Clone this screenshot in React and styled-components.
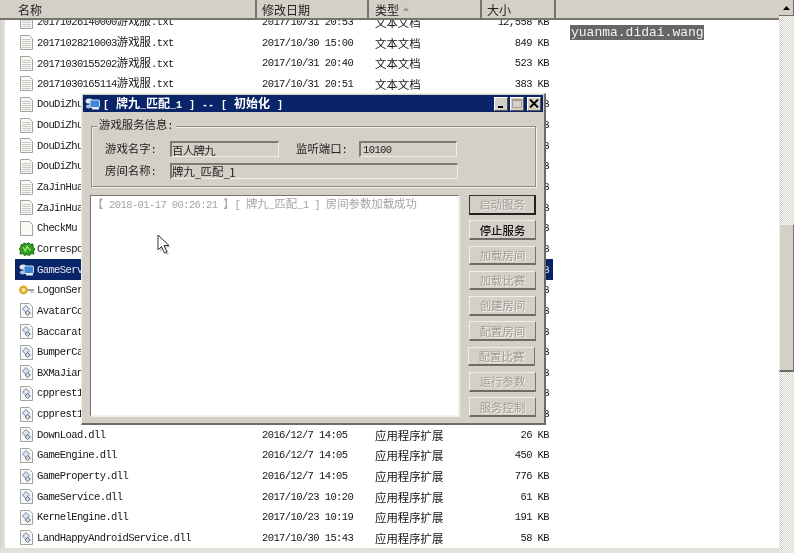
import styled, { createGlobalStyle } from "styled-components";

const GlobalStyle = createGlobalStyle`
    html, body {
        margin: 0;
        padding: 0;
        background: #fff;
        overflow: hidden;
    }
    * {
        box-sizing: border-box;
    }
`;

const GRAY = "#d4d0c8";
const NAVY = "#0a246a";

const files = [
    { name: "20171026140000游戏服.txt", date: "2017/10/31 20:53", type: "文本文档", size: "12,558", icon: "txt" },
    { name: "20171028210003游戏服.txt", date: "2017/10/30 15:00", type: "文本文档", size: "849", icon: "txt" },
    { name: "20171030155202游戏服.txt", date: "2017/10/31 20:40", type: "文本文档", size: "523", icon: "txt" },
    { name: "20171030165114游戏服.txt", date: "2017/10/31 20:51", type: "文本文档", size: "383", icon: "txt" },
    { name: "DouDiZhu", size: "8", icon: "txt" },
    { name: "DouDiZhu", size: "8", icon: "txt" },
    { name: "DouDiZhu", size: "8", icon: "txt" },
    { name: "DouDiZhu", size: "8", icon: "txt" },
    { name: "ZaJinHua", size: "8", icon: "txt" },
    { name: "ZaJinHua", size: "8", icon: "txt" },
    { name: "CheckMu", size: "8", icon: "blank" },
    { name: "Correspond", size: "8", icon: "green" },
    { name: "GameServer", size: "8", icon: "computer", selected: true },
    { name: "LogonServer", size: "8", icon: "key" },
    { name: "AvatarControl", size: "8", icon: "dll" },
    { name: "Baccarat", size: "8", icon: "dll" },
    { name: "BumperCar", size: "8", icon: "dll" },
    { name: "BXMaJiang", size: "8", icon: "dll" },
    { name: "cpprest1", size: "8", icon: "dll" },
    { name: "cpprest1", size: "8", icon: "dll" },
    { name: "DownLoad.dll", date: "2016/12/7 14:05", type: "应用程序扩展", size: "26", icon: "dll" },
    { name: "GameEngine.dll", date: "2016/12/7 14:05", type: "应用程序扩展", size: "450", icon: "dll" },
    { name: "GameProperty.dll", date: "2016/12/7 14:05", type: "应用程序扩展", size: "776", icon: "dll" },
    { name: "GameService.dll", date: "2017/10/23 10:20", type: "应用程序扩展", size: "61", icon: "dll" },
    { name: "KernelEngine.dll", date: "2017/10/23 10:19", type: "应用程序扩展", size: "191", icon: "dll" },
    { name: "LandHappyAndroidService.dll", date: "2017/10/30 15:43", type: "应用程序扩展", size: "58", icon: "dll" },
];

const services = [
    { label: "启动服务", isDefault: true },
    { label: "停止服务", enabled: true },
    { label: "加载房间" },
    { label: "加载比赛" },
    { label: "创建房间" },
    { label: "配置房间" },
    { label: "配置比赛", shift: true },
    { label: "运行参数" },
    { label: "服务控制" },
];

// SimSun style text: narrow latin next to wider CJK
const Mixed = ({ text }) =>
    text.split(/([\u3000-\u9fff\uff00-\uffef]+)/).map((part, i) =>
        i % 2 ? <Cjk key={i}>{part}</Cjk> : <span key={i}>{part}</span>
    );

const PageShape = () => (
    <path d="M.5 .5H9.5L12.5 3.5V14.5H.5Z" fill="#f8f8f5" stroke="#a2a2a0" />
);

const TxtIcon = () => (
    <svg width="13" height="15" viewBox="0 0 13 15">
        <PageShape />
        <path d="M2 4.5H11M2 6.5H11M2 8.5H11M2 10.5H11M2 12.5H11" stroke="#c8c8c4" />
    </svg>
);

const BlankIcon = () => (
    <svg width="13" height="15" viewBox="0 0 13 15">
        <PageShape />
    </svg>
);

const DllIcon = () => (
    <svg width="13" height="15" viewBox="0 0 13 15">
        <PageShape />
        <path d="M2.5 6L6 2.5L9.5 6L6 9.5Z" fill="#dbe3ef" stroke="#7488ad" />
        <path d="M5 10L7.5 7.5L10.5 10L7.5 12.5Z" fill="#c9d2e0" stroke="#66728c" />
    </svg>
);

const GreenIcon = () => (
    <svg width="16" height="14" viewBox="0 0 16 14">
        <path d="M2 2.5L4 3L5 1L7.5 2L10 .8L11 2.5L14 2L14 5L15.7 7L14.5 9.5L15 12L12 11.5L10.5 13.5L8 12.5L5.5 13.5L4 11.5L1 12L1.5 9L.3 6.5L2 5Z" fill="#2f9e1e" stroke="#1a6b12" />
        <path d="M4 5L6.5 9L8 4.5L11.5 8.5" fill="none" stroke="#a5e07f" strokeWidth="1.4" />
    </svg>
);

const ComputerIcon = () => (
    <svg width="16" height="14" viewBox="0 0 16 14">
        <ellipse cx="4" cy="4" rx="3.5" ry="2.6" fill="#dfe7f4" />
        <rect x="5" y="3" width="9.5" height="7.5" rx="1" fill="#3f86d8" stroke="#cfe0f5" />
        <path d="M7 11.5H14" stroke="#e8eef7" strokeWidth="2" />
        <ellipse cx="3.5" cy="9.5" rx="2.6" ry="2" fill="#aebfd8" />
    </svg>
);

const KeyIcon = () => (
    <svg width="16" height="12" viewBox="0 0 16 12">
        <circle cx="4.5" cy="6" r="3.2" fill="#f5e6b0" stroke="#e0a81c" strokeWidth="2.4" />
        <path d="M8 6H15" stroke="#a8a8a0" strokeWidth="2" />
        <path d="M12 7V9M14 7V9" stroke="#a8a8a0" />
    </svg>
);

const fileIcons = {
    txt: TxtIcon,
    blank: BlankIcon,
    dll: DllIcon,
    green: GreenIcon,
    computer: ComputerIcon,
    key: KeyIcon,
};

const FileRow = ({ file }) => {
    const Icon = fileIcons[file.icon];
    return (
        <Row $selected={file.selected}>
            <NameCell>
                <IconSlot $wide={file.icon === "green" || file.icon === "computer" || file.icon === "key"}>
                    <Icon />
                </IconSlot>
                <NameText><Mixed text={file.name} /></NameText>
            </NameCell>
            <DateCell>{file.date}</DateCell>
            <TypeCell>{file.type}</TypeCell>
            <SizeCell>{file.size} KB</SizeCell>
        </Row>
    );
};

const App = () => {
    return (
        <Screen>
            <GlobalStyle />
            <LeftEdge />
            <Explorer>
                <Header>
                    <HeadCell $w={257} $pad={18}>名称</HeadCell>
                    <HeadCell $w={112} $pad={5}>修改日期</HeadCell>
                    <HeadCell $w={113} $pad={6}>
                        类型
                        <SortArrow />
                    </HeadCell>
                    <HeadCell $w={74} $pad={5}>大小</HeadCell>
                    <HeadFill />
                </Header>
                <List>
                    {files.map((file, i) => <FileRow key={i} file={file} />)}
                </List>
                <BottomBand />
            </Explorer>
            <Scrollbar>
                <ScrollButton>
                    <svg width="7" height="4" viewBox="0 0 7 4"><path d="M3.5 0L7 4H0Z" fill="#000" /></svg>
                </ScrollButton>
                <ScrollGap $h={208} />
                <ScrollThumb />
                <ScrollGap />
            </Scrollbar>

            <Watermark>yuanma.didai.wang</Watermark>

            <Dialog>
                <TitleBar>
                    <TitleIcon><ComputerIcon /></TitleIcon>
                    <TitleText><Mixed text="[ 牌九_匹配_1 ] -- [ 初始化 ]" /></TitleText>
                    <CaptionButtons>
                        <CaptionButton>
                            <svg width="8" height="8" viewBox="0 0 8 8"><path d="M1 7H6" stroke="#000" strokeWidth="2" /></svg>
                        </CaptionButton>
                        <CaptionButton $gap={2}>
                            <svg width="10" height="9" viewBox="0 0 10 9"><path d="M.5 .5H9.5V8.5H.5Z M.5 1.5H9.5" fill="none" stroke="#a09c94" /></svg>
                        </CaptionButton>
                        <CaptionButton $gap={3}>
                            <svg width="10" height="9" viewBox="0 0 10 9"><path d="M1 .5L9 8.5M9 .5L1 8.5" stroke="#000" strokeWidth="1.8" /></svg>
                        </CaptionButton>
                    </CaptionButtons>
                </TitleBar>
                <DialogBody>
                    <InfoGroup>
                        <InfoLegend><Mixed text="游戏服务信息:" /></InfoLegend>
                        <FormRow>
                            <FieldLabel><Mixed text="游戏名字:" /></FieldLabel>
                            <Field $w={109}>百人牌九</Field>
                            <FieldLabel $gap={17} $w={63}><Mixed text="监听端口:" /></FieldLabel>
                            <Field $w={98} $mono>10100</Field>
                        </FormRow>
                        <FormRow>
                            <FieldLabel><Mixed text="房间名称:" /></FieldLabel>
                            <Field $w={288}><Mixed text="牌九_匹配_1" /></Field>
                        </FormRow>
                    </InfoGroup>
                    <DialogMain>
                        <LogBox>
                            <Mixed text="【 2018-01-17 00:26:21 】[ 牌九_匹配_1 ] 房间参数加载成功" />
                        </LogBox>
                        <ButtonColumn>
                            {services.map((s) => (
                                <ServiceButton
                                    key={s.label}
                                    $enabled={s.enabled}
                                    $isDefault={s.isDefault}
                                    $shift={s.shift}
                                >
                                    {s.label}
                                </ServiceButton>
                            ))}
                        </ButtonColumn>
                    </DialogMain>
                </DialogBody>
            </Dialog>

            <Cursor width="15" height="23" viewBox="0 0 15 23">
                <path d="M3 3V18L6.5 14.5L9.5 21L12 20L9 13.5H14Z" fill="#888" opacity=".45" />
                <path d="M1 1V16L4.5 12.5L7.5 19L10 18L7 11.5H12Z" fill="#fff" stroke="#333" />
            </Cursor>
        </Screen>
    );
};

const Screen = styled.div`
    position: relative;
    display: flex;
    width: 794px;
    height: 553px;
    overflow: hidden;
    background: #fff;
    font-family: "Liberation Mono", monospace;
    font-size: 10.5px;
    letter-spacing: -0.6px;
    color: #141414;
    filter: blur(0.3px);
`;

const Cjk = styled.span`
    font-family: "Noto Sans CJK SC", sans-serif;
    font-size: 11.4px;
    line-height: 1;
    letter-spacing: 0;
`;

const LeftEdge = styled.div`
    width: 5px;
    flex: none;
    background: linear-gradient(90deg, #d4d0c8, #e6e4df);
`;

const Explorer = styled.div`
    display: flex;
    flex-direction: column;
    width: 774px;
    flex: none;
`;

const Header = styled.div`
    position: relative;
    z-index: 1;
    display: flex;
    flex: none;
    height: 20px;
    margin-left: -5px;
    background: ${GRAY};
    border-bottom: 2px solid #77746e;
`;

const HeadCell = styled.div`
    position: relative;
    display: flex;
    align-items: center;
    width: ${(p) => p.$w}px;
    padding-left: ${(p) => p.$pad}px;
    border-right: 2px solid #77746e;
    font-family: "Noto Sans CJK SC", sans-serif;
    font-size: 12px;
    letter-spacing: 0;
    color: #222;
`;

const HeadFill = styled.div`
    flex: 1;
`;

const SortArrow = styled.span`
    width: 0;
    height: 0;
    margin-left: 4px;
    border-left: 3px solid transparent;
    border-right: 3px solid transparent;
    border-bottom: 4px solid #9c9890;
`;

const List = styled.div`
    flex: 1;
    min-height: 0;
    overflow: hidden;
`;

const Row = styled.div`
    display: grid;
    grid-template-columns: 242px 113px 112px 71px;
    align-items: center;
    width: 538px;
    height: 20.65px;
    margin-left: 10px;
    white-space: nowrap;
    background: ${(p) => (p.$selected ? NAVY : "transparent")};
    color: ${(p) => (p.$selected ? "#e8e8f0" : "inherit")};

    &:first-child {
        margin-top: -8.4px;
    }
`;

const NameCell = styled.div`
    display: flex;
    align-items: center;
    overflow: hidden;
`;

const IconSlot = styled.span`
    display: flex;
    width: 22px;
    flex: none;
    padding-left: ${(p) => (p.$wide ? 4 : 5)}px;
`;

const NameText = styled.span`
    display: block;
`;

const DateCell = styled.div`
    padding-left: 5px;
`;

const TypeCell = styled.div`
    padding-left: 5px;
    font-family: "Noto Sans CJK SC", sans-serif;
    font-size: 11.4px;
    letter-spacing: 0;
`;

const SizeCell = styled.div`
    padding-right: 4px;
    text-align: right;
`;

const BottomBand = styled.div`
    flex: none;
    height: 5px;
    margin-left: -5px;
    background: #e2e0da;
`;

const Scrollbar = styled.div`
    display: flex;
    flex-direction: column;
    width: 15px;
    flex: none;
`;

const ScrollButton = styled.div`
    display: flex;
    align-items: center;
    justify-content: center;
    height: 16px;
    flex: none;
    background: ${GRAY};
    border-right: 1px solid #6e6b65;
    border-bottom: 1px solid #6e6b65;
`;

const ScrollGap = styled.div`
    flex: ${(p) => (p.$h ? `0 0 ${p.$h}px` : 1)};
    background: repeating-conic-gradient(#fff 0 25%, ${GRAY} 0 50%) 0 0 / 2px 2px;
`;

const ScrollThumb = styled.div`
    height: 148px;
    flex: none;
    background: ${GRAY};
    border-top: 1px solid #f2f0ec;
    border-left: 1px solid #f2f0ec;
    border-right: 1px solid #77746e;
    border-bottom: 2px solid #6e6b65;
`;

const Watermark = styled.div`
    position: absolute;
    left: 570px;
    top: 25px;
    width: 134px;
    height: 15px;
    padding-left: 1px;
    background: #666;
    color: #f2f2f2;
    font-size: 13px;
    line-height: 15px;
    letter-spacing: 0;
    white-space: nowrap;
`;

const Dialog = styled.div`
    position: absolute;
    left: 81px;
    top: 93px;
    width: 465px;
    height: 332px;
    padding: 1px;
    background: ${GRAY};
    border-top: 1px solid #efede8;
    border-left: 1px solid #efede8;
    border-right: 2px solid #6f6c66;
    border-bottom: 2px solid #6f6c66;
    color: #222;
`;

const TitleBar = styled.div`
    display: flex;
    align-items: center;
    height: 17px;
    background: ${NAVY};
    color: #fff;
    font-weight: bold;
`;

const TitleIcon = styled.span`
    display: flex;
    width: 20px;
    flex: none;
    padding-left: 2px;
`;

const TitleText = styled.span`
    flex: 1;
    font-size: 10px;
    letter-spacing: 0;
    word-spacing: 1px;
    white-space: pre;

    ${Cjk} {
        font-size: 12px;
    }
`;

const CaptionButtons = styled.div`
    display: flex;
    padding-right: 2px;
`;

const CaptionButton = styled.div`
    display: flex;
    align-items: center;
    justify-content: center;
    width: 14px;
    height: 14px;
    margin-left: ${(p) => p.$gap || 0}px;
    background: ${GRAY};
    border-top: 1px solid #fff;
    border-left: 1px solid #fff;
    border-right: 1px solid #555;
    border-bottom: 1px solid #555;
`;

const DialogBody = styled.div`
    padding: 6px 0 0 7px;
`;

const InfoGroup = styled.fieldset`
    width: 445px;
    height: 69px;
    margin: 0 0 0 1px;
    padding: 7px 0 0 13px;
    border: 1px solid #8f8c85;
    box-shadow: 1px 1px 0 #f4f2ee, inset 1px 1px 0 #f4f2ee;
`;

const InfoLegend = styled.legend`
    height: 16px;
    margin-left: -8px;
    padding: 0 3px 0 2px;
    line-height: 16px;
    background: ${GRAY};
`;

const FormRow = styled.div`
    display: flex;
    align-items: center;
    margin-bottom: 6px;
`;

const FieldLabel = styled.div`
    width: ${(p) => p.$w || 65}px;
    margin-left: ${(p) => p.$gap || 0}px;
    flex: none;
`;

const Field = styled.div`
    display: flex;
    align-items: center;
    width: ${(p) => p.$w}px;
    height: 16px;
    padding-left: ${(p) => (p.$mono ? 2 : 0)}px;
    background: ${GRAY};
    border-top: 2px solid #7c7972;
    border-left: 2px solid #7c7972;
    border-right: 1px solid #f1efea;
    border-bottom: 1px solid #f1efea;
    font-family: ${(p) => (p.$mono ? `"Liberation Mono", monospace` : `"Noto Sans CJK SC", sans-serif`)};
    font-size: ${(p) => (p.$mono ? 10.5 : 11.4)}px;
`;

const DialogMain = styled.div`
    display: flex;
    margin-top: 8px;
`;

const LogBox = styled.div`
    width: 370px;
    height: 222px;
    padding: 2px 0 0 1px;
    background: #fff;
    border-top: 1px solid #77746e;
    border-left: 1px solid #77746e;
    border-right: 2px solid #f1efea;
    border-bottom: 2px solid #f1efea;
    color: #a4a4a4;
    white-space: pre;
`;

const ButtonColumn = styled.div`
    display: flex;
    flex-direction: column;
    gap: 5.8px;
    width: 67px;
    margin-left: 9px;
`;

const ServiceButton = styled.div`
    display: flex;
    align-items: center;
    justify-content: center;
    width: 67px;
    height: 19.5px;
    margin-left: ${(p) => (p.$shift ? -1 : 0)}px;
    background: ${GRAY};
    border-top: 1px solid ${(p) => (p.$isDefault ? "#333" : "#f1efea")};
    border-left: 1px solid ${(p) => (p.$isDefault ? "#333" : "#f1efea")};
    border-right: ${(p) => (p.$isDefault ? "2px solid #222" : "1px solid #77746e")};
    border-bottom: 2px solid ${(p) => (p.$isDefault ? "#222" : "#6f6c66")};
    font-family: "Noto Sans CJK SC", sans-serif;
    font-size: 11.4px;
    font-weight: ${(p) => (p.$enabled ? 500 : 400)};
    letter-spacing: 0;
    color: ${(p) => (p.$enabled ? "#111" : "#a09d96")};
    text-shadow: ${(p) => (p.$enabled ? "none" : "1px 1px 0 #f4f2ee")};
`;

const Cursor = styled.svg`
    position: absolute;
    left: 157px;
    top: 234px;
`;

export default App;
